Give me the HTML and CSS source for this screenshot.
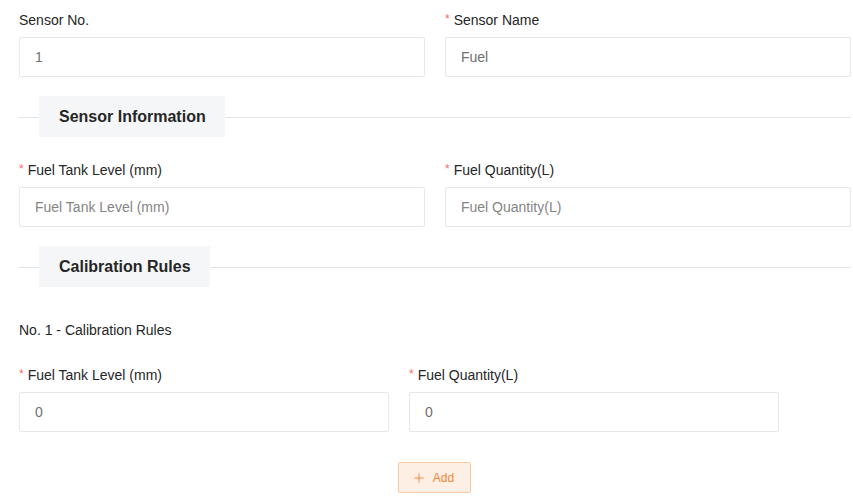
FILE: index.html
```html
<!DOCTYPE html>
<html>
<head>
<meta charset="utf-8">
<link rel="stylesheet" href="styles.css">
</head>
<body>
<div class="form">
  <div class="row">
    <div class="field">
      <div class="label">Sensor No.</div>
      <div class="input value">1</div>
    </div>
    <div class="field">
      <div class="label"><span class="req">*</span>Sensor Name</div>
      <div class="input value">Fuel</div>
    </div>
  </div>

  <div class="section s1"><div class="title">Sensor Information</div></div>

  <div class="row r2">
    <div class="field">
      <div class="label"><span class="req">*</span>Fuel Tank Level (mm)</div>
      <div class="input placeholder">Fuel Tank Level (mm)</div>
    </div>
    <div class="field">
      <div class="label"><span class="req">*</span>Fuel Quantity(L)</div>
      <div class="input placeholder">Fuel Quantity(L)</div>
    </div>
  </div>

  <div class="section s2"><div class="title">Calibration Rules</div></div>

  <div class="subhead">No. 1 - Calibration Rules</div>

  <div class="row r3">
    <div class="field narrow">
      <div class="label"><span class="req">*</span>Fuel Tank Level (mm)</div>
      <div class="input value">0</div>
    </div>
    <div class="field narrow">
      <div class="label"><span class="req">*</span>Fuel Quantity(L)</div>
      <div class="input value">0</div>
    </div>
  </div>

  <div class="actions">
    <button class="add"><svg class="plus" width="10" height="10" viewBox="0 0 10 10"><path d="M5 0.5V9.5M0.5 5H9.5" stroke="currentColor" stroke-width="1" fill="none"/></svg>Add</button>
  </div>
</div>
</body>
</html>
```

FILE: styles.css
```css
html, body {
  margin: 0;
  padding: 0;
  background: #ffffff;
}
body {
  font-family: "Liberation Sans", Arial, sans-serif;
  color: #333333;
}
.form {
  padding: 10px 2px 0 19px;
}
.row {
  display: flex;
  gap: 20px;
}
.field {
  flex: 1;
  display: flex;
  flex-direction: column;
}
.field.narrow {
  flex: 0 0 370px;
}
.label {
  font-size: 14px;
  line-height: 20px;
  height: 20px;
  margin-bottom: 7px;
  color: #262626;
  white-space: nowrap;
}
.req {
  color: #f56c6c;
  font-size: 12px;
  margin-right: 4px;
  vertical-align: top;
  line-height: 18px;
}
.input {
  box-sizing: border-box;
  height: 40px;
  border: 1px solid #e6e8eb;
  border-radius: 2px;
  padding: 0 15px;
  font-size: 14px;
  line-height: 38px;
  background: #fff;
}
.input.value {
  color: #707070;
}
.input.placeholder {
  color: #858585;
}
.section {
  position: relative;
  height: 41px;
  display: flex;
  align-items: center;
}
.section::before {
  content: "";
  position: absolute;
  left: 0;
  right: 0;
  top: 21px;
  height: 1px;
  background: #e2e4e8;
}
.section .title {
  position: relative;
  margin-left: 20px;
  padding: 0 19px 0 20px;
  height: 41px;
  line-height: 42px;
  background: #f5f6f8;
  font-size: 16px;
  font-weight: bold;
  color: #262626;
}
.s1 {
  margin-top: 19px;
}
.r2 {
  margin-top: 23px;
}
.s2 {
  margin-top: 19px;
}
.subhead {
  margin-top: 33px;
  font-size: 14px;
  line-height: 20px;
  color: #262626;
}
.r3 {
  margin-top: 25px;
}
.actions {
  display: flex;
  justify-content: center;
  margin-top: 30px;
  padding-right: 2px;
}
.add {
  box-sizing: border-box;
  width: 73px;
  height: 31px;
  border: 1px solid #f8cba6;
  background: #fdefe3;
  color: #f0883a;
  border-radius: 2px;
  font-family: "Liberation Sans", Arial, sans-serif;
  font-size: 12px;
  padding: 0;
  display: flex;
  align-items: center;
  justify-content: center;
}
.plus {
  margin-right: 9px;
  display: block;
}
```
